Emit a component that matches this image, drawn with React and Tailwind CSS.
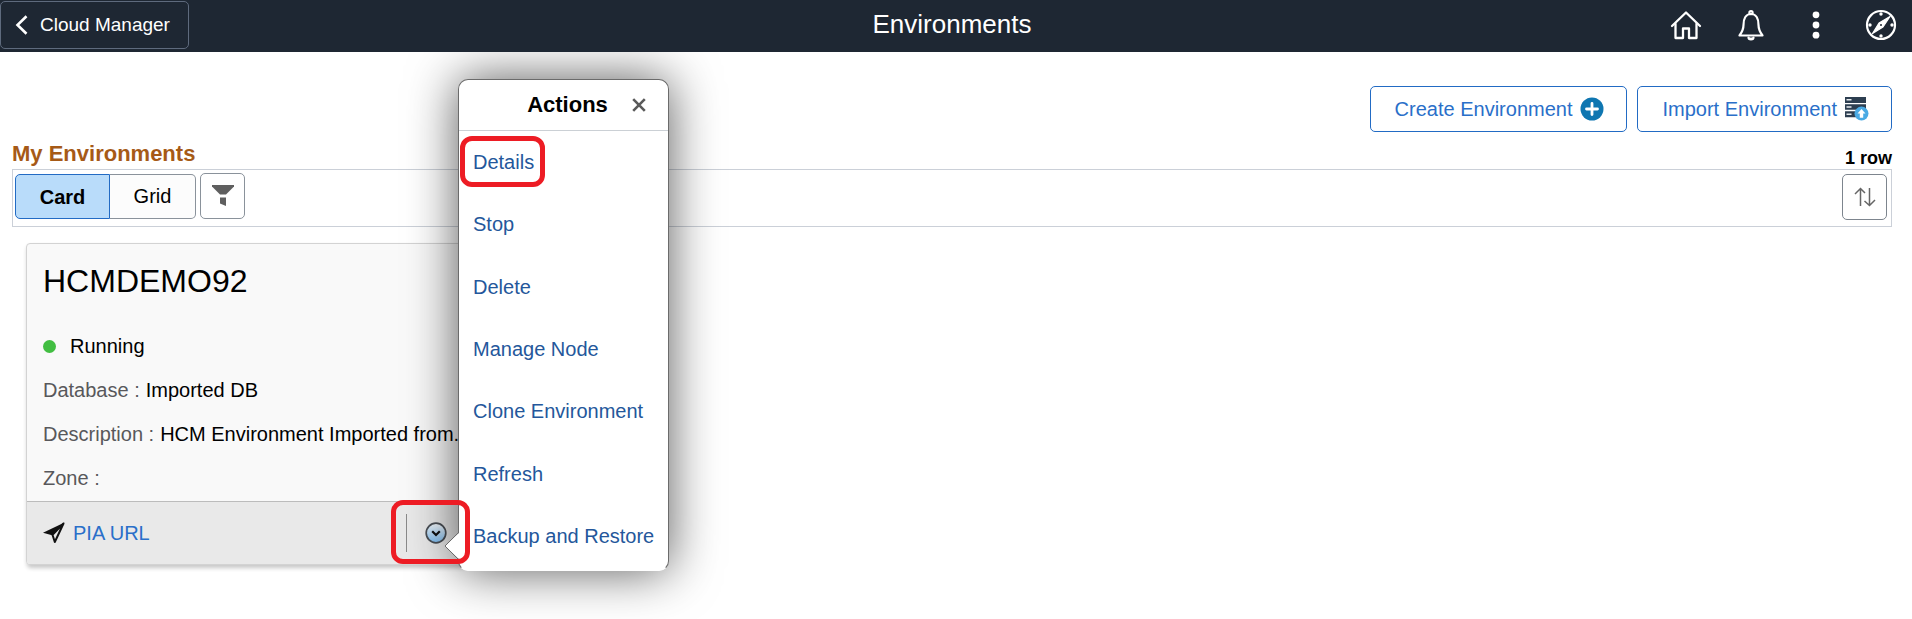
const actions = [
  "Details",
  "Stop",
  "Delete",
  "Manage Node",
  "Clone Environment",
  "Refresh",
  "Backup and Restore",
];

function HomeIcon() {
  return (
    <svg viewBox="0 0 32 32" className="size-8" fill="none" stroke="currentColor" strokeWidth="2.300" strokeLinecap="round" strokeLinejoin="round" aria-hidden="true">
      <path d="M2 17 16 3.500 30 17" />
      <path d="M5.500 15v14h7.500V19.500h6V29h7.500V15" />
    </svg>
  );
}

function BellIcon() {
  return (
    <svg viewBox="0 0 32 32" className="size-8" fill="none" stroke="currentColor" strokeWidth="2.200" strokeLinecap="round" strokeLinejoin="round" aria-hidden="true">
      <path d="M4.500 26.500h23c-3-4-4-6-4-10.500 0-6-2-11-7.500-11S8.500 10 8.500 16c0 4.500-1 6.500-4 10.500z" />
      <circle cx="16" cy="3.600" r="1.600" />
      <path d="M13.500 28.500a2.500 1.800 0 0 0 5 0" fill="currentColor" />
    </svg>
  );
}

function DotsIcon() {
  return (
    <svg viewBox="0 0 32 32" className="size-8" fill="currentColor" aria-hidden="true">
      <circle cx="16" cy="5.800" r="3.400" />
      <circle cx="16" cy="16" r="3.400" />
      <circle cx="16" cy="26.200" r="3.400" />
    </svg>
  );
}

function CompassIcon() {
  return (
    <svg viewBox="0 0 32 32" className="size-8" fill="none" stroke="currentColor" strokeWidth="2.200" aria-hidden="true">
      <circle cx="16" cy="16" r="14" />
      <path d="M25 7.500 14 14l-6.500 10.500L18 18z" strokeWidth="1.200" strokeLinejoin="round" fill="currentColor" />
      <circle cx="16" cy="16" r="1" fill="#1e2733" stroke="none" />
      <g fill="currentColor" stroke="none">
        <circle cx="16" cy="5" r="1.700" />
        <circle cx="16" cy="27" r="1.700" />
        <circle cx="5" cy="16" r="1.700" />
        <circle cx="27" cy="16" r="1.700" />
      </g>
    </svg>
  );
}

function PlusIcon() {
  return (
    <svg viewBox="0 0 24 24" className="size-6" aria-hidden="true">
      <circle cx="12" cy="12" r="11.500" fill="#0e76b1" />
      <path d="M12 6.500v11M6.500 12h11" stroke="#fff" strokeWidth="2.800" strokeLinecap="round" />
    </svg>
  );
}

function ServerIcon() {
  return (
    <svg viewBox="0 0 24 24" className="size-6" aria-hidden="true">
      <path d="M0 0h21v6H0zM0 7.300h21v5.500H0zM0 14.200h21v6H0z" fill="#2d3e50" />
      <path d="M1.500 2.700h5M1.500 10h5M1.500 17.200h5" stroke="#e8ecef" strokeWidth="1.600" />
      <circle cx="16.500" cy="16.600" r="7" fill="#4aaae4" />
      <path d="M16.500 12l4 4.400h-2.300v4.400h-3.400v-4.400h-2.300z" fill="#fff" />
    </svg>
  );
}

const iconButton = "flex size-8 items-center justify-center text-white";
const outlineButton =
  "flex h-[46px] items-center gap-2 rounded-[5px] border border-[#226bc4] bg-white pr-[22px] pl-6 text-[20px] text-[#2a6fc9]";
const fieldLabel = "shrink-0 text-[#58585b]";

function EnvironmentCard() {
  return (
    <article className="relative w-[440px] rounded-[4px] border border-[#d3d3d3] bg-[#f9f9f9] shadow-[1px_3px_4px_rgba(0,0,0,0.22)]">
      <div className="px-4 pb-px">
        <h2 className="mb-[6px] text-[32px] leading-[74px]">HCMDEMO92</h2>
        <p className="flex items-center gap-[14px] leading-[44px]">
          <span className="size-[13px] rounded-full bg-[#42be42]" />
          Running
        </p>
        <dl className="leading-[44px]">
          <div className="flex gap-[6px]">
            <dt className={fieldLabel}>Database :</dt>
            <dd>Imported DB</dd>
          </div>
          <div className="flex gap-[6px]">
            <dt className={fieldLabel}>Description :</dt>
            <dd className="whitespace-nowrap">HCM Environment Imported from...</dd>
          </div>
          <div className="flex gap-[6px]">
            <dt className={fieldLabel}>Zone :</dt>
            <dd></dd>
          </div>
        </dl>
      </div>
      <footer className="flex h-[63px] items-center justify-between rounded-b-[3px] border-t border-[#bcbcbc] bg-[#e9e9e9] pr-[18px] pl-4">
        <a href="#pia" className="flex items-center gap-2 text-[#2a6fc9]">
          <svg viewBox="0 0 22 22" className="size-[22px]" aria-hidden="true">
            <path d="M21.500.5 0 10.800l9 2.500z" fill="#111" />
            <path d="M20.500 1.500 9.500 12.800l2.300 7.200z" fill="none" stroke="#111" strokeWidth="2" strokeLinejoin="round" />
          </svg>
          PIA URL
        </a>
        <div className="flex h-[38px] items-center border-l border-[#8a8a8a] pl-[18px]">
          <button type="button" aria-label="Related actions">
            <svg viewBox="0 0 22 22" className="size-[22px]" aria-hidden="true">
              <defs>
                <linearGradient id="actionFill" x1="0" y1="0" x2="0" y2="1">
                  <stop offset="0" stopColor="#f4f8fb" />
                  <stop offset="1" stopColor="#7fbdf0" />
                </linearGradient>
              </defs>
              <circle cx="11" cy="11" r="9.800" fill="url(#actionFill)" stroke="#4a4f55" strokeWidth="1.700" />
              <path d="M7.200 9.200 11 13l3.800-3.800" fill="none" stroke="#111" strokeWidth="2.200" />
            </svg>
          </button>
        </div>
      </footer>
      <ActionsMenu />
    </article>
  );
}

function ActionsMenu() {
  return (
    <section
      aria-label="Actions"
      className="absolute top-[-165px] left-[431px] w-[211px] rounded-[10px] border border-[#6b6b6b] border-b-white bg-white shadow-[0_0_50px_rgba(0,0,0,0.65)]"
    >
      <svg viewBox="0 0 16 30" className="absolute top-[451px] left-[-15px] h-[30px] w-4" aria-hidden="true">
        <path d="M16 1 1 15l15 14z" fill="#fff" />
        <path d="M15 1 1 15l14 14" fill="none" stroke="#6b6b6b" strokeWidth="1" />
      </svg>
      <header className="grid h-[51px] grid-cols-[1fr_auto_1fr] items-center border-b border-[#cbd0d5] pl-2">
        <h3 className="col-start-2 text-[22px] leading-[50px] font-bold">Actions</h3>
        <button type="button" aria-label="Close" className="ml-6 w-fit">
          <svg viewBox="0 0 14 14" className="size-[14px]" fill="none" stroke="#5a5a5a" strokeWidth="2.600" aria-hidden="true">
            <path d="M1.200 1.200l11.600 11.600M12.800 1.200 1.200 12.800" />
          </svg>
        </button>
      </header>
      <ul className="mb-[3px] grid h-[436px] grid-rows-7">
        {actions.map((name) => (
          <li key={name} className="relative flex items-center pl-[14px]">
            <a href="#action" className="text-[#24579b]">{name}</a>
            {name === "Details" && (
              <span className="pointer-events-none absolute top-[5px] left-[1px] h-[51px] w-[85px] rounded-[12px] border-5 border-[#ed1c24]" />
            )}
          </li>
        ))}
      </ul>
      <span className="pointer-events-none absolute top-[420px] left-[-68px] h-[64px] w-[79px] rounded-[12px] border-5 border-[#ed1c24]" />
    </section>
  );
}

export default function App() {
  return (
    <div className="min-h-screen overflow-hidden bg-white font-['Liberation_Sans',Arial,sans-serif] text-[20px] leading-6 text-black">
      <header className="relative z-10 grid h-[52px] grid-cols-[1fr_auto_1fr] items-center bg-[#1e2733] text-white">
        <button
          type="button"
          className="mb-[2px] flex h-12 w-fit items-center gap-3 rounded-[5px] border border-[#5e6a7d] pr-[18px] pl-[14px] text-[19px]"
        >
          <svg viewBox="0 0 13 20" className="h-5 w-[13px]" fill="none" stroke="currentColor" strokeWidth="2.600" aria-hidden="true">
            <path d="M11.500 1.300 2.500 10l9 8.700" />
          </svg>
          Cloud Manager
        </button>
        <h1 className="pr-2 pb-1 text-[26px] leading-8">Environments</h1>
        <nav className="flex items-center gap-[33px] justify-self-end pr-[15px] pb-[2px]">
          <button type="button" aria-label="Home" className={iconButton}><HomeIcon /></button>
          <button type="button" aria-label="Notifications" className={iconButton}><BellIcon /></button>
          <button type="button" aria-label="More" className={iconButton}><DotsIcon /></button>
          <button type="button" aria-label="Navigator" className={iconButton}><CompassIcon /></button>
        </nav>
      </header>

      <main className="pr-5 pl-3">
        <div className="flex justify-end gap-[10px] pt-[34px]">
          <button type="button" className={outlineButton}>
            Create Environment
            <PlusIcon />
          </button>
          <button type="button" className={outlineButton}>
            Import Environment
            <ServerIcon />
          </button>
        </div>

        <div className="flex h-[37px] items-end justify-between font-bold">
          <h2 className="text-[22px] leading-[30px] text-[#a65a17]">My Environments</h2>
          <p className="text-[18px] leading-[22px]">1 row</p>
        </div>

        <div className="flex h-[58px] items-start justify-between border border-[#cbd0d8] pt-[3px] pr-1 pl-[2px]">
          <div className="flex items-start gap-[4px]">
            <div className="flex pt-px">
              <button type="button" className="h-[45px] w-[95px] rounded-l-[5px] border border-[#226bc4] bg-[#b9dcfa] font-bold">
                Card
              </button>
              <button type="button" className="h-[45px] w-[86px] rounded-r-[5px] border border-l-0 border-[#8a929b] bg-[#fcfcfc] pb-[2px]">
                Grid
              </button>
            </div>
            <button type="button" aria-label="Filter" className="flex h-[46px] w-[45px] items-center justify-center rounded-[5px] border border-[#8a929b] bg-white">
              <svg viewBox="0 0 22 22" className="size-[22px]" fill="#5f5f5f" aria-hidden="true">
                <path d="M0 0h22v1.500L14 9.500H8L0 1.500z" />
                <path d="M8 12.500h6V21L8 18.500z" />
              </svg>
            </button>
          </div>
          <button type="button" aria-label="Sort" className="mt-px flex h-[46px] w-[45px] items-center justify-center rounded-[5px] border border-[#7d858e] bg-white">
            <svg viewBox="0 0 22 20" className="h-5 w-[22px]" fill="none" stroke="#666" strokeWidth="1.500" aria-hidden="true">
              <path d="M6.500 19V1.500M1 7l5.500-5.500L11 6" />
              <path d="M15.500 1v17.500M10.500 14l5 4.500L21 13" />
            </svg>
          </button>
        </div>

        <div className="flex pt-4 pb-8 pl-[14px]">
          <EnvironmentCard />
        </div>
      </main>
    </div>
  );
}
